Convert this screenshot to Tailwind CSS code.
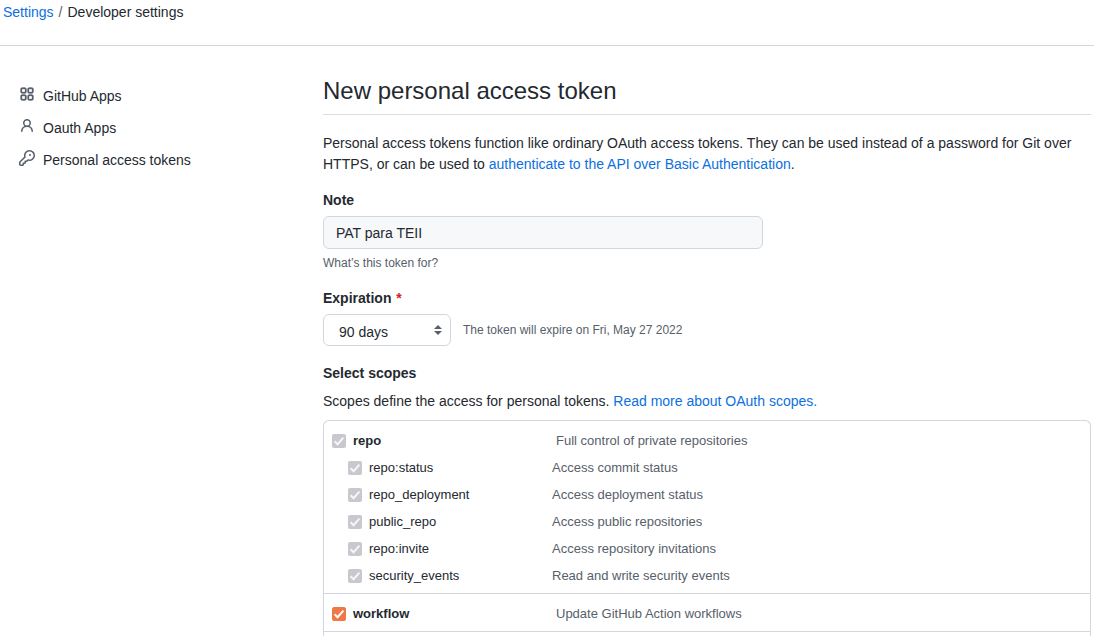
<!DOCTYPE html>
<html lang="en">
<head>
<meta charset="utf-8">
<meta name="viewport" content="width=device-width, initial-scale=1">
<title>New personal access token</title>
<script src="https://cdn.jsdelivr.net/npm/@tailwindcss/browser@4"></script>
</head>
<body class="flex min-h-screen flex-col bg-white font-['Liberation_Sans',Arial,sans-serif] text-sm leading-[21px] text-[#24292f]">
<svg class="hidden" aria-hidden="true">
  <symbol id="check" viewBox="0 0 14 14"><path d="M2.6 7.2l3 3L11.4 3.6" fill="none" stroke="currentColor" stroke-width="2"/></symbol>
</svg>

<header class="border-b border-[#d0d7de] pt-0.5 pb-[22px] pl-[3px]">
  <nav aria-label="Breadcrumb">
    <ol class="flex gap-[5px]">
      <li><a href="#" class="text-[#0d70e0]">Settings</a></li>
      <li aria-hidden="true" class="text-[#57606a]">/</li>
      <li aria-current="page">Developer settings</li>
    </ol>
  </nav>
</header>

<div class="flex grow">
  <nav aria-label="Developer settings" class="w-[323px] shrink-0 pt-[34px] pl-[19px]">
    <ul>
      <li><a href="#" class="flex h-8 items-center gap-2">
        <svg class="mb-1 size-4 fill-[#57606a] stroke-[#57606a] stroke-[0.3]" viewBox="0 0 16 16" aria-hidden="true"><path fill-rule="evenodd" d="M1.5 3.25c0-.966.784-1.75 1.75-1.75h2.5c.966 0 1.75.784 1.75 1.75v2.5A1.75 1.75 0 015.75 7.5h-2.5A1.75 1.75 0 011.5 5.75v-2.5zM3.25 3a.25.25 0 00-.25.25v2.5c0 .138.112.25.25.25h2.5A.25.25 0 006 5.75v-2.5A.25.25 0 005.75 3h-2.5zM1.5 10.25c0-.966.784-1.75 1.75-1.75h2.5c.966 0 1.75.784 1.75 1.75v2.5a1.75 1.75 0 01-1.75 1.75h-2.5a1.75 1.75 0 01-1.75-1.75v-2.5zM3.25 10a.25.25 0 00-.25.25v2.5c0 .138.112.25.25.25h2.5a.25.25 0 00.25-.25v-2.5a.25.25 0 00-.25-.25h-2.5zM8.5 3.25c0-.966.784-1.75 1.75-1.75h2.5c.966 0 1.75.784 1.75 1.75v2.5a1.75 1.75 0 01-1.75 1.75h-2.5A1.75 1.75 0 018.5 5.75v-2.5zM10.25 3a.25.25 0 00-.25.25v2.5c0 .138.112.25.25.25h2.5a.25.25 0 00.25-.25v-2.5a.25.25 0 00-.25-.25h-2.5zM8.5 10.25c0-.966.784-1.75 1.75-1.75h2.5c.966 0 1.75.784 1.75 1.75v2.5a1.75 1.75 0 01-1.75 1.75h-2.5a1.75 1.75 0 01-1.75-1.75v-2.5zM10.25 10a.25.25 0 00-.25.25v2.5c0 .138.112.25.25.25h2.5a.25.25 0 00.25-.25v-2.5a.25.25 0 00-.25-.25h-2.5z"/></svg>
        GitHub Apps</a></li>
      <li><a href="#" class="flex h-8 items-center gap-2">
        <svg class="mb-1 size-4 fill-[#57606a]" viewBox="0 0 16 16" aria-hidden="true"><path fill-rule="evenodd" d="M10.5 5a2.5 2.5 0 11-5 0 2.5 2.5 0 015 0zm.061 3.073a4 4 0 10-5.123 0 6.004 6.004 0 00-3.431 5.142.75.75 0 001.498.07 4.5 4.5 0 018.99 0 .75.75 0 101.498-.07 6.005 6.005 0 00-3.432-5.142z"/></svg>
        Oauth Apps</a></li>
      <li><a href="#" class="flex h-8 items-center gap-2">
        <svg class="mb-1 size-4 fill-[#57606a]" viewBox="0 0 16 16" aria-hidden="true"><path fill-rule="evenodd" d="M6.5 5.5a4 4 0 112.731 3.795.75.75 0 00-.768.18L7.44 10.5H6.25a.75.75 0 00-.75.75v1.19l-.06.06H4.25a.75.75 0 00-.75.75v1.19l-.06.06H1.75a.25.25 0 01-.25-.25v-1.69l5.024-5.023a.75.75 0 00.181-.768A3.995 3.995 0 016.5 5.5zm4-5.5a5.5 5.5 0 00-5.348 6.788L.22 11.72a.75.75 0 00-.22.53v2C0 15.216.784 16 1.75 16h2a.75.75 0 00.53-.22l.5-.5a.75.75 0 00.22-.53V14h.75a.75.75 0 00.53-.22l.5-.5a.75.75 0 00.22-.53V12h.75a.75.75 0 00.53-.22l.932-.932A5.5 5.5 0 1010.5 0zm.5 6a1 1 0 100-2 1 1 0 000 2z"/></svg>
        Personal access tokens</a></li>
    </ul>
  </nav>

  <main class="flex min-w-0 grow flex-col pt-[27px] pr-[3px]">
    <h1 class="border-b border-[#d8dee4] pb-[5px] text-2xl leading-9">New personal access token</h1>
    <p class="mt-[18px]">Personal access tokens function like ordinary OAuth access tokens. They can be used instead of a password for Git over HTTPS, or can be used to <a href="#" class="text-[#0d70e0]">authenticate to the API over Basic Authentication</a>.</p>

    <form class="flex grow flex-col">
      <label for="note" class="mt-[15px] font-bold">Note</label>
      <input id="note" type="text" value="PAT para TEII" aria-describedby="note-hint" class="mt-[5px] h-[33px] w-[440px] max-w-full rounded-md border border-[#d0d7de] bg-[#f6f8fa] px-3">
      <p id="note-hint" class="mt-[5px] text-xs leading-[18px] text-[#57606a]">What’s this token for?</p>

      <label for="expiration" class="mt-4 font-bold">Expiration <span class="ml-px text-[#cf222e]">*</span></label>
      <div class="mt-[5px] flex items-center gap-3">
        <div class="grid w-32">
          <select id="expiration" class="col-start-1 row-start-1 h-8 w-full appearance-none rounded-md border border-[#d0d7de] bg-white pt-1 pr-6 pl-[15px]">
            <option>90 days</option>
          </select>
          <svg class="pointer-events-none col-start-1 row-start-1 mr-[9px] h-2.5 w-2 self-center justify-self-end fill-[#57606a]" viewBox="0 0 8 10" aria-hidden="true"><path d="M4 0l4 4H0zM4 10L0 6h8z"/></svg>
        </div>
        <span class="text-xs leading-[18px] text-[#57606a]">The token will expire on Fri, May 27 2022</span>
      </div>

      <h2 class="mt-[17px] font-bold">Select scopes</h2>
      <p class="mt-[7px]">Scopes define the access for personal tokens. <a href="#" class="text-[#0d70e0]">Read more about OAuth scopes.</a></p>

      <div class="mt-2 grow rounded-t-md border border-b-0 border-[#d0d7de] text-[13px]">
        <ul class="border-b border-[#d0d7de] pt-1.5 pb-1 pl-2">
          <li class="flex h-[27px] items-center">
            <label class="flex w-[224px] items-center gap-[7px] font-bold"><span class="grid"><input type="checkbox" checked disabled class="col-start-1 row-start-1 size-3.5 appearance-none rounded-xs bg-[#c8c8cf]"><svg class="col-start-1 row-start-1 size-3.5 text-[#f6f6f8]" aria-hidden="true"><use href="#check"/></svg></span>repo</label>
            <span class="text-[#57606a]">Full control of private repositories</span>
          </li>
          <li class="flex h-[27px] items-center pl-4">
            <label class="flex w-[204px] items-center gap-[7px]"><span class="grid"><input type="checkbox" checked disabled class="col-start-1 row-start-1 size-3.5 appearance-none rounded-xs bg-[#c8c8cf]"><svg class="col-start-1 row-start-1 size-3.5 text-[#f6f6f8]" aria-hidden="true"><use href="#check"/></svg></span>repo:status</label>
            <span class="text-[#57606a]">Access commit status</span>
          </li>
          <li class="flex h-[27px] items-center pl-4">
            <label class="flex w-[204px] items-center gap-[7px]"><span class="grid"><input type="checkbox" checked disabled class="col-start-1 row-start-1 size-3.5 appearance-none rounded-xs bg-[#c8c8cf]"><svg class="col-start-1 row-start-1 size-3.5 text-[#f6f6f8]" aria-hidden="true"><use href="#check"/></svg></span>repo_deployment</label>
            <span class="text-[#57606a]">Access deployment status</span>
          </li>
          <li class="flex h-[27px] items-center pl-4">
            <label class="flex w-[204px] items-center gap-[7px]"><span class="grid"><input type="checkbox" checked disabled class="col-start-1 row-start-1 size-3.5 appearance-none rounded-xs bg-[#c8c8cf]"><svg class="col-start-1 row-start-1 size-3.5 text-[#f6f6f8]" aria-hidden="true"><use href="#check"/></svg></span>public_repo</label>
            <span class="text-[#57606a]">Access public repositories</span>
          </li>
          <li class="flex h-[27px] items-center pl-4">
            <label class="flex w-[204px] items-center gap-[7px]"><span class="grid"><input type="checkbox" checked disabled class="col-start-1 row-start-1 size-3.5 appearance-none rounded-xs bg-[#c8c8cf]"><svg class="col-start-1 row-start-1 size-3.5 text-[#f6f6f8]" aria-hidden="true"><use href="#check"/></svg></span>repo:invite</label>
            <span class="text-[#57606a]">Access repository invitations</span>
          </li>
          <li class="flex h-[27px] items-center pl-4">
            <label class="flex w-[204px] items-center gap-[7px]"><span class="grid"><input type="checkbox" checked disabled class="col-start-1 row-start-1 size-3.5 appearance-none rounded-xs bg-[#c8c8cf]"><svg class="col-start-1 row-start-1 size-3.5 text-[#f6f6f8]" aria-hidden="true"><use href="#check"/></svg></span>security_events</label>
            <span class="text-[#57606a]">Read and write security events</span>
          </li>
        </ul>
        <ul class="border-b border-[#d0d7de] pt-1.5 pb-1 pl-2">
          <li class="flex h-[27px] items-center">
            <label class="flex w-[224px] items-center gap-[7px] font-bold"><span class="grid"><input type="checkbox" checked class="peer col-start-1 row-start-1 size-3.5 appearance-none rounded-xs border border-[#8c959f] checked:border-[#f07746] checked:bg-[#f07746]"><svg class="pointer-events-none invisible col-start-1 row-start-1 size-3.5 text-white peer-checked:visible" aria-hidden="true"><use href="#check"/></svg></span>workflow</label>
            <span class="text-[#57606a]">Update GitHub Action workflows</span>
          </li>
        </ul>
      </div>
    </form>
  </main>
</div>
</body>
</html>
